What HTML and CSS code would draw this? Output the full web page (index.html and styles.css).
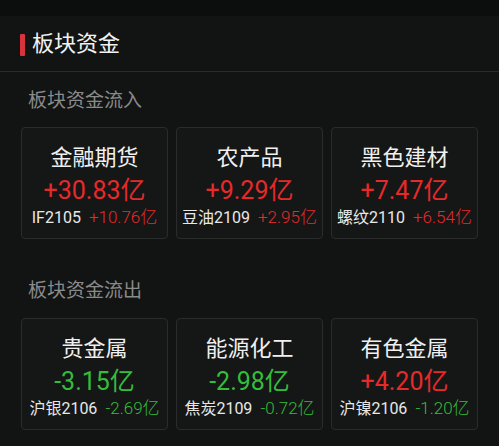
FILE: index.html
```html
<!DOCTYPE html>
<html lang="zh-CN">
<head>
<meta charset="utf-8">
<link rel="stylesheet" href="styles.css">
</head>
<body>
<div class="topbar"></div>
<div class="header"><span class="mark"></span><span class="title">板块资金</span></div>

<section class="section">
  <div class="sec-title">板块资金流入</div>
  <div class="cards">
    <div class="card">
      <div class="name">金融期货</div>
      <div class="value up">+30.83亿</div>
      <div class="sub"><span class="code">IF2105</span><span class="amt up">+10.76亿</span></div>
    </div>
    <div class="card">
      <div class="name">农产品</div>
      <div class="value up">+9.29亿</div>
      <div class="sub"><span class="code">豆油2109</span><span class="amt up">+2.95亿</span></div>
    </div>
    <div class="card">
      <div class="name">黑色建材</div>
      <div class="value up">+7.47亿</div>
      <div class="sub"><span class="code">螺纹2110</span><span class="amt up">+6.54亿</span></div>
    </div>
  </div>
</section>

<section class="section">
  <div class="sec-title">板块资金流出</div>
  <div class="cards">
    <div class="card">
      <div class="name">贵金属</div>
      <div class="value down">-3.15亿</div>
      <div class="sub"><span class="code">沪银2106</span><span class="amt down">-2.69亿</span></div>
    </div>
    <div class="card">
      <div class="name">能源化工</div>
      <div class="value down">-2.98亿</div>
      <div class="sub"><span class="code">焦炭2109</span><span class="amt down">-0.72亿</span></div>
    </div>
    <div class="card">
      <div class="name">有色金属</div>
      <div class="value up">+4.20亿</div>
      <div class="sub"><span class="code">沪镍2106</span><span class="amt down">-1.20亿</span></div>
    </div>
  </div>
</section>
</body>
</html>
```

FILE: styles.css
```css
html, body {
  margin: 0;
  padding: 0;
  background: #121313;
  font-family: Roboto, "Noto Sans CJK SC", sans-serif;
  color: #eeeeee;
}
.topbar {
  height: 16px;
  background: #0c0d0d;
}
.header {
  height: 55px;
  border-bottom: 1px solid #2a2c2c;
  display: flex;
  align-items: center;
  padding-left: 20px;
  gap: 7px;
}
.mark {
  width: 5px;
  height: 22px;
  background: #d9343c;
  border-radius: 1px;
  margin-top: 2px;
}
.title {
  font-size: 22px;
  line-height: 30px;
  color: #f2f2f2;
  margin-top: 1px;
}
.section {
  padding-top: 16px;
}
.section + .section {
  padding-top: 39px;
}
.sec-title {
  margin: 0 0 13px 28px;
  font-size: 19px;
  line-height: 26px;
  color: #8a8a8a;
}
.section + .section .sec-title {
  margin-bottom: 14px;
}
.cards {
  display: grid;
  grid-template-columns: 147px 147px 147px;
  column-gap: 8px;
  padding-left: 21px;
}
.card {
  border: 1px solid #2a2c2c;
  border-radius: 4px;
  background: #151616;
  padding-top: 15px;
  box-sizing: border-box;
  height: 112px;
  text-align: center;
}
.name {
  font-size: 22px;
  line-height: 30px;
  color: #f0f0f0;
}
.value {
  font-size: 25px;
  line-height: 30px;
  margin-top: 3px;
}
.sub {
  display: flex;
  justify-content: center;
  align-items: baseline;
  gap: 8px;
  line-height: 22px;
  white-space: nowrap;
}
.code {
  font-size: 16px;
  color: #e8e8e8;
}
.amt {
  font-size: 17px;
  font-weight: 300;
}
.up { color: #e62a2a; }
.down { color: #34bd3c; }
```
